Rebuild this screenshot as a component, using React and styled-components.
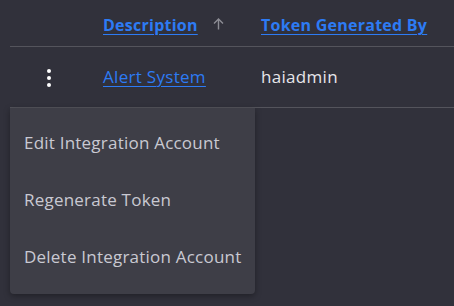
import React from "react";
import styled, { createGlobalStyle } from "styled-components";

const Global = createGlobalStyle`
  html, body { margin: 0; padding: 0; background: #31313b; }
  body { font-family: "Open Sans", "Liberation Sans", sans-serif; width: 454px; height: 306px; overflow: hidden; }
`;

const Page = styled.div`
  padding-left: 10px;
  position: relative;
`;

const Row = styled.div`
  display: grid;
  grid-template-columns: 93px 158px 1fr;
  align-items: center;
  height: ${(p) => p.$h}px;
  border-bottom: 1px solid #54545c;
  position: relative;
`;

const HeadLink = styled.a`
  color: #2d7bf4;
  font-weight: 700;
  font-size: 16px;
  letter-spacing: 0.25px;
  text-decoration: underline;
  text-underline-offset: 3px;
  text-decoration-thickness: 1px;
`;

const HeadCell = styled.div`
  display: flex;
  align-items: center;
  padding-top: 4px;
`;

const Arrow = styled.svg`
  margin-left: 15px;
  margin-top: -2px;
  display: block;
`;

const Cell = styled.div`
  font-size: 17px;
  letter-spacing: 0.3px;
  color: #e6e6ea;
  padding-bottom: 2px;
`;

const RowLink = styled.a`
  color: #2d7bf4;
  text-decoration: underline;
  text-underline-offset: 3px;
  text-decoration-thickness: 1px;
`;

const Kebab = styled.div`
  display: flex;
  flex-direction: column;
  align-items: center;
  gap: 3px;
  padding-left: 37px;
  width: 4px;
  padding-top: 2px;
`;

const Dot = styled.span`
  width: 4px;
  height: 4px;
  border-radius: 50%;
  background: #ffffff;
`;

const Menu = styled.div`
  position: absolute;
  left: 10px;
  top: 108px;
  width: 245px;
  height: 186px;
  background: #3e3e47;
  border-radius: 0 0 4px 4px;
  box-shadow: 0 2px 6px rgba(0, 0, 0, 0.35);
  display: flex;
  flex-direction: column;
  padding-top: 6px;
  box-sizing: border-box;
`;

const MenuItem = styled.div`
  height: 57px;
  display: flex;
  align-items: center;
  padding-left: 14px;
  font-size: 17px;
  letter-spacing: 0.22px;
  color: #c9c9d2;
  white-space: nowrap;
`;

export default function App() {
  return (
    <>
      <Global />
      <Page>
        <Row $h={46}>
          <div />
          <HeadCell>
            <HeadLink>Description</HeadLink>
            <Arrow width="11" height="12" viewBox="0 0 11 12">
              <path d="M5.5 11.5V1M1 5.5L5.5 1L10 5.5" fill="none" stroke="#8d8d95" strokeWidth="1.4" />
            </Arrow>
          </HeadCell>
          <HeadCell>
            <HeadLink>Token Generated By</HeadLink>
          </HeadCell>
        </Row>
        <Row $h={60}>
          <Kebab>
            <Dot />
            <Dot />
            <Dot />
          </Kebab>
          <Cell>
            <RowLink>Alert System</RowLink>
          </Cell>
          <Cell>haiadmin</Cell>
        </Row>
      </Page>
      <Menu>
        <MenuItem>Edit Integration Account</MenuItem>
        <MenuItem>Regenerate Token</MenuItem>
        <MenuItem>Delete Integration Account</MenuItem>
      </Menu>
    </>
  );
}
